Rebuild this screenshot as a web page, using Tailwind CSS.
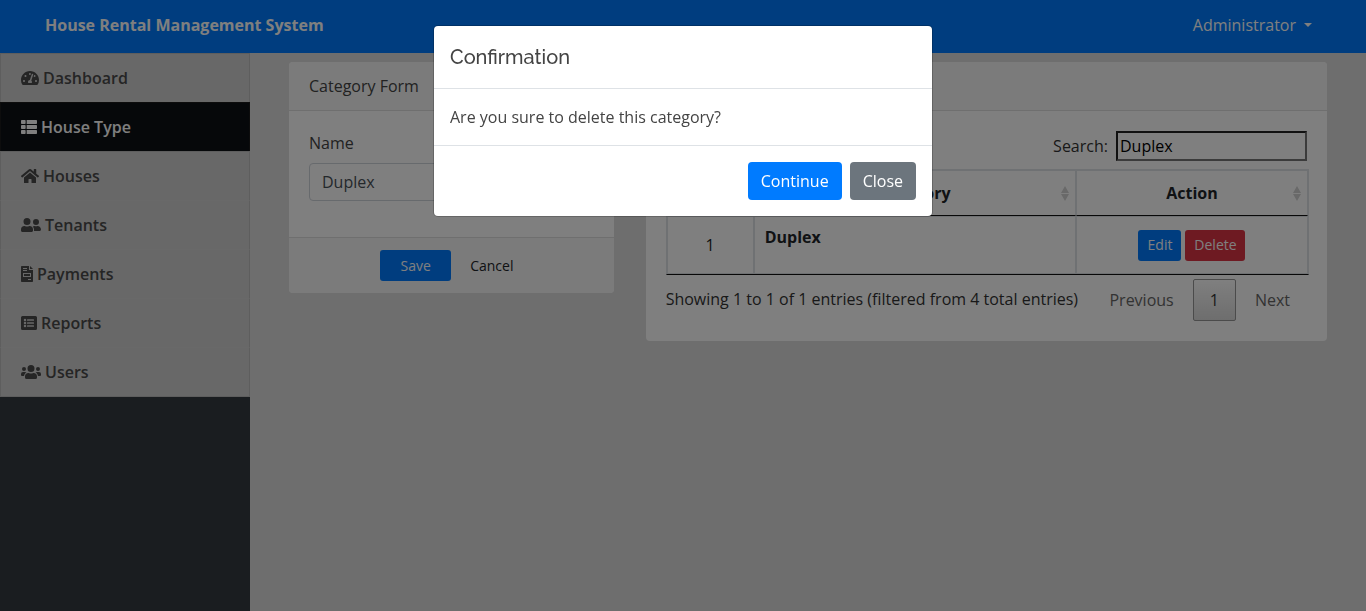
<!DOCTYPE html>
<html lang="en">
<head>
<meta charset="utf-8">
<meta name="viewport" content="width=device-width, initial-scale=1">
<title>House Rental Management System</title>
<script src="https://cdn.jsdelivr.net/npm/@tailwindcss/browser@4"></script>
</head>
<body class="flex min-h-screen flex-col bg-[#dcdcdc] font-['Open_Sans',sans-serif] text-base text-[#444444]">

<header class="flex items-center justify-between bg-[#007bff] pt-[13px] pr-[54px] pb-4 pl-[45px] leading-6 text-white">
  <b>House Rental Management System</b>
  <button type="button" class="flex items-center gap-2">Administrator
    <span class="border-x-4 border-t-4 border-x-transparent border-t-white"></span>
  </button>
</header>

<div class="flex grow">
  <nav class="w-[250px] shrink-0 bg-[#343a40] font-semibold text-[#4a4a4a]">
    <ul>
      <li><a href="#" class="flex items-center gap-1 border border-b-0 border-[#bdbdbd] bg-[#d0d0d0] px-5 py-3 leading-6">
        <svg class="h-4 w-[18px]" viewBox="0 0 576 512" fill="currentColor"><path fill-rule="evenodd" d="M288 32C128.94 32 0 160.94 0 320c0 52.8 14.25 102.26 39.06 144.8 5.61 9.62 16.3 15.2 27.44 15.2h443c11.14 0 21.83-5.58 27.44-15.2C561.75 422.26 576 372.8 576 320c0-159.06-128.94-288-288-288zm0 64c14.71 0 26.58 10.13 30.32 23.65-1.11 2.26-2.64 4.23-3.45 6.67l-9.22 27.67c-5.13 3.49-10.97 6.01-17.64 6.01-17.67 0-32-14.33-32-32S270.33 96 288 96zM96 384c-17.67 0-32-14.33-32-32s14.33-32 32-32 32 14.33 32 32-14.33 32-32 32zm48-160c-17.67 0-32-14.33-32-32s14.33-32 32-32 32 14.33 32 32-14.33 32-32 32zm246.77-72.41l-61.33 184C343.13 347.33 352 364.54 352 384c0 11.72-3.38 22.55-8.88 32H232.88c-5.5-9.45-8.88-20.28-8.88-32 0-33.94 26.5-61.43 59.9-63.59l61.34-184.01c4.17-12.56 17.73-19.45 30.36-15.17 12.57 4.19 19.35 17.79 15.17 30.36zm14.66 57.2l15.52-46.55c3.47-1.29 7.13-2.23 11.05-2.23 17.67 0 32 14.33 32 32s-14.33 32-32 32c-11.38-.01-21.42-6.05-26.57-15.22zM480 384c-17.67 0-32-14.33-32-32s14.33-32 32-32 32 14.33 32 32-14.33 32-32 32z"/></svg>
        Dashboard</a></li>
      <li><a href="#" class="flex items-center gap-1 border border-b-0 border-[#1a1a1a] bg-[#0d1114] px-5 py-3 leading-6 text-white">
        <svg class="size-4" viewBox="0 0 512 512" fill="currentColor"><path d="M149 216v80c0 13-10 24-24 24H24c-13 0-24-11-24-24v-80c0-13 11-24 24-24h101c14 0 24 11 24 24zM0 376v80c0 13 11 24 24 24h101c14 0 24-11 24-24v-80c0-13-10-24-24-24H24c-13 0-24 11-24 24zM125 32H24C11 32 0 43 0 56v80c0 13 11 24 24 24h101c14 0 24-11 24-24V56c0-13-10-24-24-24zm56 448h307c13 0 24-11 24-24v-80c0-13-11-24-24-24H181v128zm0-448v128h307c13 0 24-11 24-24V56c0-13-11-24-24-24H181zm0 288h307c13 0 24-11 24-24v-80c0-13-11-24-24-24H181v128z"/></svg>
        House Type</a></li>
      <li><a href="#" class="flex items-center gap-1 border border-b-0 border-[#bdbdbd] bg-[#d0d0d0] px-5 py-3 leading-6">
        <svg class="h-4 w-[18px]" viewBox="0 0 576 512" fill="currentColor"><path d="M280 148L96 300v164a16 16 0 0016 16h112a16 16 0 0016-16v-96a16 16 0 0116-16h64a16 16 0 0116 16v96a16 16 0 0016 16h112a16 16 0 0016-16V300L296 148a12 12 0 00-16 0zm292 103l-84-69V44a12 12 0 00-12-12h-56a12 12 0 00-12 12v73l-89-74a48 48 0 00-61 0L4 251a12 12 0 00-1 17l25 31a12 12 0 0017 2l235-194a12 12 0 0116 0l235 194a12 12 0 0017-2l26-31a12 12 0 00-2-17z"/></svg>
        Houses</a></li>
      <li><a href="#" class="flex items-center gap-1 border-x border-t border-[#bdbdbd] border-t-[#d3d3d3] bg-[#d0d0d0] px-5 py-3 leading-6">
        <svg class="h-4 w-5" viewBox="0 0 640 512" fill="currentColor"><path d="M192 256a112 112 0 100-224 112 112 0 000 224zm77 32h-8a161 161 0 01-138 0h-8A115 115 0 000 403v29c0 27 21 48 48 48h288c27 0 48-21 48-48v-29a115 115 0 00-115-115zm211-32a96 96 0 100-192 96 96 0 000 192zm48 32h-4a126 126 0 01-88 0h-4c-20 0-39 6-56 15 25 27 40 62 40 102v38c0 2-1 5-1 7h177c27 0 48-21 48-48 0-63-50-114-112-114z"/></svg>
        Tenants</a></li>
      <li><a href="#" class="flex items-center gap-1 border-x border-t border-[#bdbdbd] border-t-[#d3d3d3] bg-[#d0d0d0] px-5 py-3 leading-6">
        <svg class="h-4 w-3" viewBox="0 0 384 512" fill="currentColor"><path fill-rule="evenodd" d="M256 0v128h128v360a24 24 0 01-24 24H24a24 24 0 01-24-24V24A24 24 0 0124 0zm33 0l95 96H288V0zM64 64v32h128V64zm0 64v32h128v-32zm0 96v128h256V224zm32 32h192v64H96zm128 160v32h96v-32z"/></svg>
        Payments</a></li>
      <li><a href="#" class="flex items-center gap-1 border-x border-t border-[#bdbdbd] border-t-[#d3d3d3] bg-[#d0d0d0] px-5 py-3 leading-6">
        <svg class="size-4" viewBox="0 0 512 512" fill="currentColor"><path fill-rule="evenodd" d="M48 32h416a48 48 0 0148 48v352a48 48 0 01-48 48H48a48 48 0 01-48-48V80a48 48 0 0148-48zm80 88a40 40 0 100 80 40 40 0 000-80zm0 96a40 40 0 100 80 40 40 0 000-80zm0 96a40 40 0 100 80 40 40 0 000-80zm76-176a12 12 0 00-12 12v24a12 12 0 0012 12h200a12 12 0 0012-12v-24a12 12 0 00-12-12zm0 96a12 12 0 00-12 12v24a12 12 0 0012 12h200a12 12 0 0012-12v-24a12 12 0 00-12-12zm0 96a12 12 0 00-12 12v24a12 12 0 0012 12h200a12 12 0 0012-12v-24a12 12 0 00-12-12z"/></svg>
        Reports</a></li>
      <li><a href="#" class="flex items-center gap-1 border border-[#bdbdbd] border-t-[#d3d3d3] bg-[#d0d0d0] px-5 py-3 leading-6">
        <svg class="h-4 w-5" viewBox="0 0 640 512" fill="currentColor"><path d="M96 224a64 64 0 100-128 64 64 0 000 128zm448 0a64 64 0 100-128 64 64 0 000 128zm32 32h-64c-18 0-34 7-45 19 40 22 69 62 75 109h66a32 32 0 0032-32v-32a64 64 0 00-64-64zm-256 0a112 112 0 100-224 112 112 0 000 224zm77 32h-8a155 155 0 01-138 0h-8A115 115 0 00128 403v29a48 48 0 0048 48h288a48 48 0 0048-48v-29a115 115 0 00-115-115zm-224-13a64 64 0 00-45-19H64a64 64 0 00-64 64v32a32 32 0 0032 32h66c6-47 35-87 75-109z"/></svg>
        Users</a></li>
    </ul>
  </nav>

  <main class="flex grow items-start px-[23px] pt-[9px]">
    <section class="w-1/3 px-4">
      <form class="rounded-sm bg-white leading-6">
        <h2 class="rounded-t-sm border-b border-[#dfdfdf] bg-[#f7f7f7] px-5 py-3">Category Form</h2>
        <div class="px-5 pt-5 pb-9">
          <label for="name" class="mb-2 block">Name</label>
          <input id="name" type="text" value="Duplex" class="h-[38px] w-full rounded border border-[#ced4da] bg-white px-3 text-[#495057]">
        </div>
        <div class="flex justify-center gap-[10px] rounded-b-sm border-t border-[#dfdfdf] bg-[#f7f7f7] py-3 text-sm">
          <button type="submit" class="h-[31px] w-[71px] rounded-[3px] bg-[#007bff] text-white">Save</button>
          <button type="button" class="h-[31px] px-[9px] text-[#212529]">Cancel</button>
        </div>
      </form>
    </section>

    <section class="w-2/3 px-4">
      <div class="rounded-sm bg-white leading-6">
        <h2 class="rounded-t-sm border-b border-[#dfdfdf] bg-[#f7f7f7] px-5 py-3">Category List</h2>
        <div class="p-5 text-[#333333]">
          <div class="mb-2 flex items-center justify-end gap-2">
            <label for="search">Search:</label>
            <input id="search" type="search" value="Duplex" class="h-[30px] w-[191px] border-2 border-t-[#222222] border-r-[#767676] border-b-[#767676] border-l-[#222222] px-[2px] text-black">
          </div>
          <table class="w-[calc(100%+2px)] table-fixed border-separate border-spacing-0 border border-[#dee2e6] border-b-[#111111] text-center text-[#212529]">
            <thead>
              <tr>
                <th class="relative w-[87px] border border-[#dee2e6] border-b-[#111111] px-[18px] py-[10px]">#</th>
                <th class="relative border border-[#dee2e6] border-b-[#111111] px-[18px] py-[10px]">Category
                  <svg class="absolute top-[15px] right-[6px] h-4 w-2" viewBox="0 0 8 16" fill="#d3d3d3"><path d="M0 7l4-7 4 7zM0 8h8l-4 7z"/></svg></th>
                <th class="relative w-[232px] border border-[#dee2e6] border-b-[#111111] px-[18px] py-[10px]">Action
                  <svg class="absolute top-[15px] right-[6px] h-4 w-2" viewBox="0 0 8 16" fill="#d3d3d3"><path d="M0 7l4-7 4 7zM0 8h8l-4 7z"/></svg></th>
              </tr>
            </thead>
            <tbody>
              <tr>
                <td class="border border-[#dee2e6] p-2">1</td>
                <td class="border border-[#dee2e6] px-[10px] pt-2 pb-6 text-left"><b>Duplex</b></td>
                <td class="border border-[#dee2e6] px-2 py-0">
                  <div class="flex justify-center gap-1 text-sm text-white">
                    <button type="button" class="h-[31px] w-[43px] rounded-[3px] bg-[#007bff]">Edit</button>
                    <button type="button" class="h-[31px] w-[60px] rounded-[3px] bg-[#dc3545]">Delete</button>
                  </div>
                </td>
              </tr>
            </tbody>
          </table>
          <div class="flex justify-between pt-1">
            <p class="pt-2">Showing 1 to 1 of 1 entries (filtered from 4 total entries)</p>
            <div class="flex gap-[2px] text-[#666666]">
              <button type="button" class="h-[42px] px-[17px]">Previous</button>
              <button type="button" class="h-[42px] rounded-xs border border-[#979797] bg-linear-to-b from-white to-[#dcdcdc] px-4 text-[#333333]">1</button>
              <button type="button" class="h-[42px] px-[17px]">Next</button>
            </div>
          </div>
        </div>
      </div>
    </section>
  </main>
</div>

<div class="fixed inset-0 flex items-start justify-center bg-black/50 pt-[26px]">
  <div role="dialog" aria-modal="true" aria-labelledby="dialog-title" class="w-[498px] rounded bg-white leading-6 shadow-[0_0_0_1px_rgba(0,0,0,0.2)]">
    <h5 id="dialog-title" class="border-b border-[#dee2e6] px-4 pt-4 pb-[15px] font-['Raleway','Lato',sans-serif] text-xl leading-[31px] font-medium">Confirmation</h5>
    <p class="p-4">Are you sure to delete this category?</p>
    <div class="flex justify-end gap-2 border-t border-[#dee2e6] p-4 text-white">
      <button type="button" class="h-[38px] rounded bg-[#007bff] px-[13px]">Continue</button>
      <button type="button" class="h-[38px] rounded bg-[#6c757d] px-[13px]">Close</button>
    </div>
  </div>
</div>
</body>
</html>
